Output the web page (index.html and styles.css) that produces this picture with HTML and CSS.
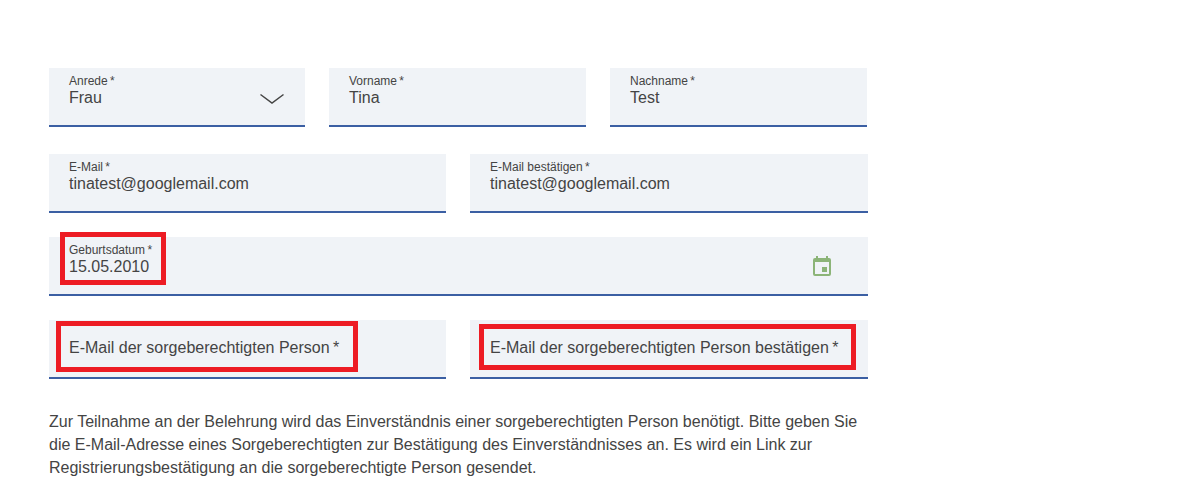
FILE: index.html
```html
<!DOCTYPE html>
<html lang="de">
<head>
<meta charset="utf-8">
<title>Registrierung</title>
<link rel="stylesheet" href="styles.css">
</head>
<body>
<form class="form">
  <div class="row row-three row-first">
    <div class="field">
      <label class="label">Anrede<span class="req"> *</span></label>
      <div class="value">Frau</div>
      <svg class="chevron" width="26" height="14" viewBox="0 0 26 14"><path d="M1.5 1.5 L13 10 L24.5 1.5" fill="none" stroke="#444" stroke-width="1.5"/></svg>
    </div>
    <div class="field">
      <label class="label">Vorname<span class="req"> *</span></label>
      <div class="value">Tina</div>
    </div>
    <div class="field">
      <label class="label">Nachname<span class="req"> *</span></label>
      <div class="value">Test</div>
    </div>
  </div>
  <div class="row row-two">
    <div class="field">
      <label class="label">E-Mail<span class="req"> *</span></label>
      <div class="value">tinatest@googlemail.com</div>
    </div>
    <div class="field">
      <label class="label">E-Mail bestätigen<span class="req"> *</span></label>
      <div class="value">tinatest@googlemail.com</div>
    </div>
  </div>
  <div class="row row-one">
    <div class="field">
      <span class="mark mark-date"></span>
      <label class="label">Geburtsdatum<span class="req"> *</span></label>
      <div class="value">15.05.2010</div>
      <svg class="calendar" width="18" height="20" viewBox="0 0 18 20"><path fill="#8cb478" fill-rule="evenodd" d="M3 0h2v2h8V0h2v2h1a2 2 0 0 1 2 2v14a2 2 0 0 1-2 2H2a2 2 0 0 1-2-2V4a2 2 0 0 1 2-2h1zM2 6v12h14V6z"/><rect fill="#8cb478" x="9" y="11" width="5" height="5"/></svg>
    </div>
  </div>
  <div class="row row-two">
    <div class="field field-empty">
      <span class="mark mark-parent"></span>
      <label class="placeholder">E-Mail der sorgeberechtigten Person<span class="req"> *</span></label>
    </div>
    <div class="field field-empty">
      <span class="mark mark-parent-confirm"></span>
      <label class="placeholder">E-Mail der sorgeberechtigten Person bestätigen<span class="req"> *</span></label>
    </div>
  </div>
  <p class="note">Zur Teilnahme an der Belehrung wird das Einverständnis einer sorgeberechtigten Person benötigt. Bitte geben Sie die E-Mail-Adresse eines Sorgeberechtigten zur Bestätigung des Einverständnisses an. Es wird ein Link zur Registrierungsbestätigung an die sorgeberechtigte Person gesendet.</p>
</form>
</body>
</html>
```
FILE: styles.css
```css
html, body {
  margin: 0;
  padding: 0;
  background: #fff;
}
body {
  font-family: "Liberation Sans", Arial, sans-serif;
  color: #444;
  height: 488px;
  overflow: hidden;
}
.form {
  width: 819px;
  margin-left: 49px;
  padding-top: 68px;
}
.row {
  display: grid;
  margin-bottom: 24px;
}
.row-first {
  margin-bottom: 27px;
}
.row-three {
  grid-template-columns: 256px 257px 257px;
  column-gap: 24px;
}
.row-two {
  grid-template-columns: 397px 398px;
  column-gap: 24px;
}
.row-one {
  grid-template-columns: 819px;
}
.field {
  position: relative;
  box-sizing: border-box;
  height: 59px;
  padding: 6px 20px 0;
  background: #f0f3f7;
  border-bottom: 2px solid #3b5fa3;
}
.field-empty {
  padding-top: 18px;
}
.label {
  display: block;
  font-size: 12px;
  line-height: 15px;
  color: #444;
}
.req {
  word-spacing: -1px;
}
.value {
  font-size: 16px;
  line-height: 17px;
  color: #444;
}
.placeholder {
  display: block;
  font-size: 16px;
  line-height: 19px;
  color: #444;
}
.chevron {
  position: absolute;
  left: 210px;
  top: 25px;
}
.calendar {
  position: absolute;
  left: 764px;
  top: 19px;
}
.mark {
  position: absolute;
  box-sizing: border-box;
  border: 5px solid #ed1c24;
}
.mark-date {
  left: 11px;
  top: -5px;
  width: 106px;
  height: 53px;
}
.mark-parent {
  left: 7px;
  top: 1px;
  width: 302px;
  height: 51px;
}
.mark-parent-confirm {
  left: 9px;
  top: 4px;
  width: 377px;
  height: 46px;
}
.note {
  margin: 31px 0 0;
  font-size: 16px;
  line-height: 23px;
  color: #444;
}
```
